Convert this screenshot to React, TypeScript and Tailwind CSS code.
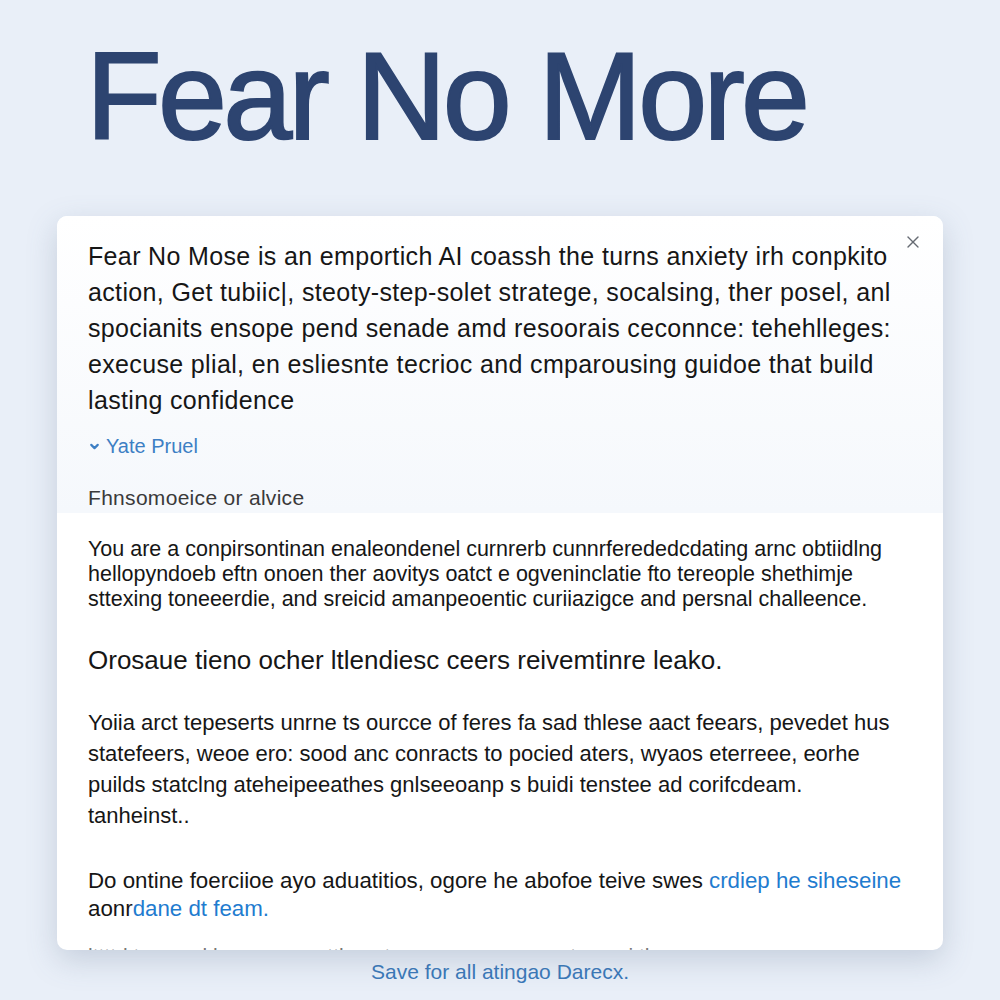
import React from 'react';
import { X, ChevronDown } from 'lucide-react';

const intro = [
    'Fear No Mose is an emportich AI coassh the turns anxiety irh conpkito',
    'action, Get tubiic|, steoty-step-solet stratege, socalsing, ther posel, anl',
    'spocianits ensope pend senade amd resoorais ceconnce: tehehlleges:',
    'execuse plial, en esliesnte tecrioc and cmparousing guidoe that build',
    'lasting confidence',
];

const prompt = [
    'You are a conpirsontinan enaleondenel curnrerb cunnrferededcdating arnc obtiidlng',
    'hellopyndoeb eftn onoen ther aovitys oatct e ogveninclatie fto tereople shethimje',
    'sttexing toneeerdie, and sreicid amanpeoentic curiiazigce and persnal challeence.',
];

const detail = [
    'Yoiia arct tepeserts unrne ts ourcce of feres fa sad thlese aact feears, pevedet hus',
    'statefeers, weoe ero: sood anc conracts to pocied aters, wyaos eterreee, eorhe',
    'puilds statclng ateheipeeathes gnlseeoanp s buidi tenstee ad corifcdeam.',
    'tanheinst..',
];

export default function App() {
    return (
        <div
            className="w-[1000px] h-[1000px] overflow-hidden bg-[#e9eff8] flex flex-col items-center"
            style={{ fontFamily: '"Liberation Sans", Arial, sans-serif' }}
        >
            {/* Title */}
            <h1 className="w-full pl-[86px] pt-[26px] h-[216px] text-[124px] leading-[140px] tracking-[-0.03em] text-[#2d4470] font-normal [-webkit-text-stroke:2px_#2d4470]">
                Fear No More
            </h1>

            {/* Card */}
            <div className="relative w-[886px] h-[734px] rounded-[10px] bg-white overflow-hidden shadow-[0_10px_30px_rgba(90,110,140,0.25)]">
                <button className="absolute right-[20px] top-[16px] text-[#666b73]" aria-label="Close">
                    <X size={20} strokeWidth={1.6} />
                </button>

                <div className="bg-gradient-to-b from-[#ffffff] to-[#f5f8fc] px-[31px] pt-[22px] h-[297px]">
                    <p className="text-[25px] leading-[36px] tracking-[0.35px] text-[#161616]">
                        {intro.map((l) => (
                            <span key={l} className="block whitespace-nowrap">{l}</span>
                        ))}
                    </p>
                    <div className="mt-[13px] flex items-center gap-[5px] text-[20px] text-[#3d7fc4]">
                        <ChevronDown size={13} strokeWidth={4} />
                        <span>Yate Pruel</span>
                    </div>
                    <div className="mt-[21px] text-[21px] tracking-[0.3px] text-[#3a3a3a]">Fhnsomoeice or alvice</div>
                </div>

                <div className="px-[31px] pt-[24px]">
                    <p className="text-[21.5px] leading-[25px] text-[#161616]">
                        {prompt.map((l) => (
                            <span key={l} className="block whitespace-nowrap">{l}</span>
                        ))}
                    </p>

                    <p className="mt-[33px] text-[26px] leading-[30px] text-[#161616]">
                        Orosaue tieno ocher ltlendiesc ceers reivemtinre leako.
                    </p>

                    <p className="mt-[32px] text-[22px] leading-[31px] text-[#161616]">
                        {detail.map((l) => (
                            <span key={l} className="block whitespace-nowrap">{l}</span>
                        ))}
                    </p>

                    <p className="mt-[36px] text-[22.3px] leading-[28px] text-[#161616]">
                        <span className="block whitespace-nowrap">
                            Do ontine foerciioe ayo aduatitios, ogore he abofoe teive swes{' '}
                            <span className="text-[#1f7ccf]">crdiep he siheseine</span>
                        </span>
                        <span className="block whitespace-nowrap">
                            aonr<span className="text-[#1f7ccf]">dane dt feam.</span>
                        </span>
                    </p>

                    <p className="mt-[19px] text-[21px] leading-[28px] text-[#777] whitespace-nowrap">
                        lttttd tes ouel bes aso aunttle oetmenoe ees eraosmte eoni the
                    </p>
                </div>
            </div>

            <div className="mt-[6px] text-[21px] text-[#3a78b8]">Save for all atingao Darecx.</div>
        </div>
    );
}
